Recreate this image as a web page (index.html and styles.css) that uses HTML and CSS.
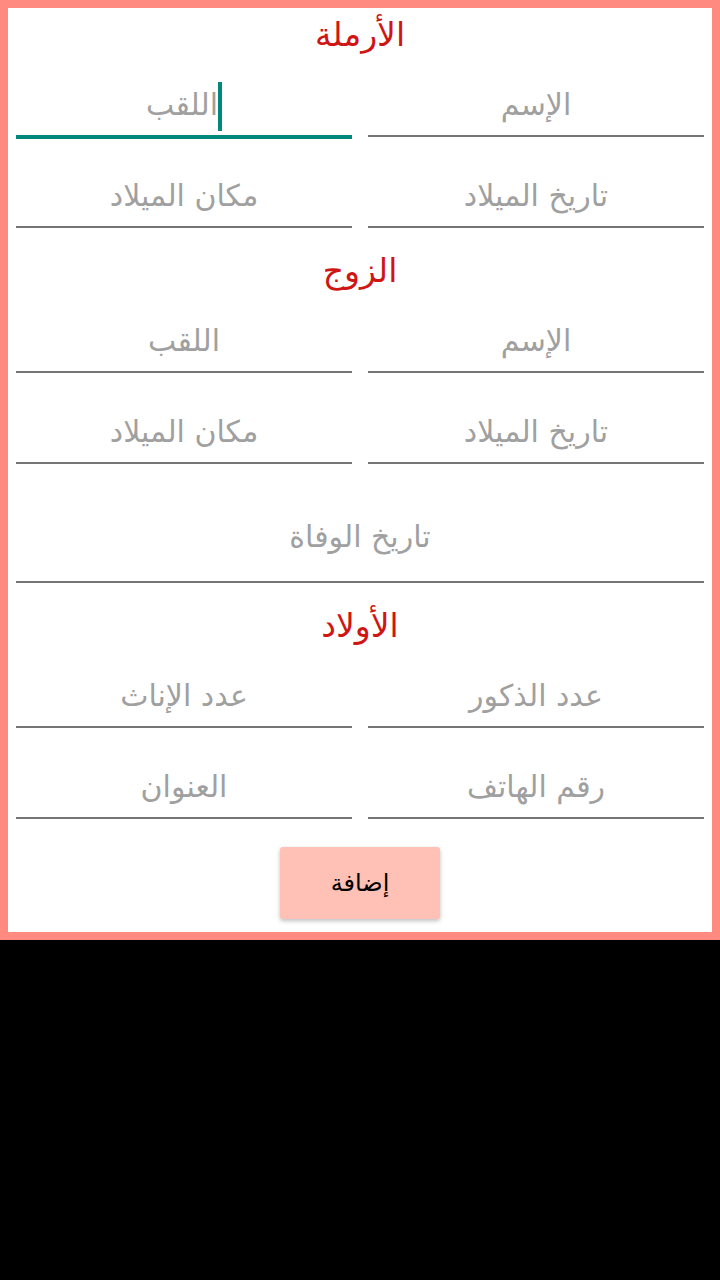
FILE: index.html
```html
<!DOCTYPE html>
<html lang="ar" dir="rtl">
<head>
<meta charset="utf-8">
<link rel="stylesheet" href="styles.css">
</head>
<body>
<div class="frame">
  <h2 class="title">الأرملة</h2>
  <div class="row">
    <div class="field"><span class="hint">الإسم</span></div>
    <div class="field focused"><span class="caret"></span><span class="hint">اللقب</span></div>
  </div>
  <div class="row">
    <div class="field"><span class="hint">تاريخ الميلاد</span></div>
    <div class="field"><span class="hint">مكان الميلاد</span></div>
  </div>

  <h2 class="title spaced">الزوج</h2>
  <div class="row">
    <div class="field"><span class="hint">الإسم</span></div>
    <div class="field"><span class="hint">اللقب</span></div>
  </div>
  <div class="row">
    <div class="field"><span class="hint">تاريخ الميلاد</span></div>
    <div class="field"><span class="hint">مكان الميلاد</span></div>
  </div>
  <div class="field tall"><span class="hint">تاريخ الوفاة</span></div>

  <h2 class="title spaced">الأولاد</h2>
  <div class="row">
    <div class="field"><span class="hint">عدد الذكور</span></div>
    <div class="field"><span class="hint">عدد الإناث</span></div>
  </div>
  <div class="row">
    <div class="field"><span class="hint">رقم الهاتف</span></div>
    <div class="field"><span class="hint">العنوان</span></div>
  </div>

  <div class="actions">
    <button class="add-btn">إضافة</button>
  </div>
</div>
</body>
</html>
```

FILE: styles.css
```css
html, body {
  margin: 0;
  padding: 0;
  background: #000;
}

body {
  width: 720px;
  height: 1280px;
  font-family: "DejaVu Sans", sans-serif;
}

.frame {
  box-sizing: border-box;
  width: 720px;
  height: 940px;
  border: 8px solid #ff8a80;
  background: #fff;
  padding: 0 8px;
  direction: rtl;
}

.title {
  margin: 0;
  height: 38px;
  line-height: 38px;
  padding-top: 8px;
  box-sizing: border-box;
  text-align: center;
  font-size: 33px;
  font-weight: normal;
  color: #d01515;
}

.title.spaced {
  margin-top: 16px;
}

.row {
  display: grid;
  grid-template-columns: 1fr 1fr;
  column-gap: 16px;
}

.field {
  box-sizing: border-box;
  height: 91px;
  border-bottom: 2px solid #757575;
  display: flex;
  justify-content: center;
  align-items: flex-end;
  padding-bottom: 10px;
}

.field.tall {
  height: 119px;
  padding-bottom: 24px;
}

.field.focused {
  border-bottom-color: #00897b;
  box-shadow: 0 2px 0 #00897b;
}

.hint {
  font-size: 30px;
  line-height: 40px;
  color: #a0a0a0;
}

.caret {
  display: inline-block;
  width: 4px;
  height: 49px;
  margin-bottom: -6px;
  background: #00897b;
  align-self: flex-end;
}

.actions {
  display: flex;
  justify-content: center;
  padding-top: 28px;
}

.add-btn {
  width: 160px;
  height: 72px;
  border: none;
  border-radius: 3px;
  background: #ffc0b5;
  color: #000;
  font-family: "DejaVu Sans", sans-serif;
  font-size: 24px;
  box-shadow: 0 2px 4px rgba(0, 0, 0, 0.25);
}
```
